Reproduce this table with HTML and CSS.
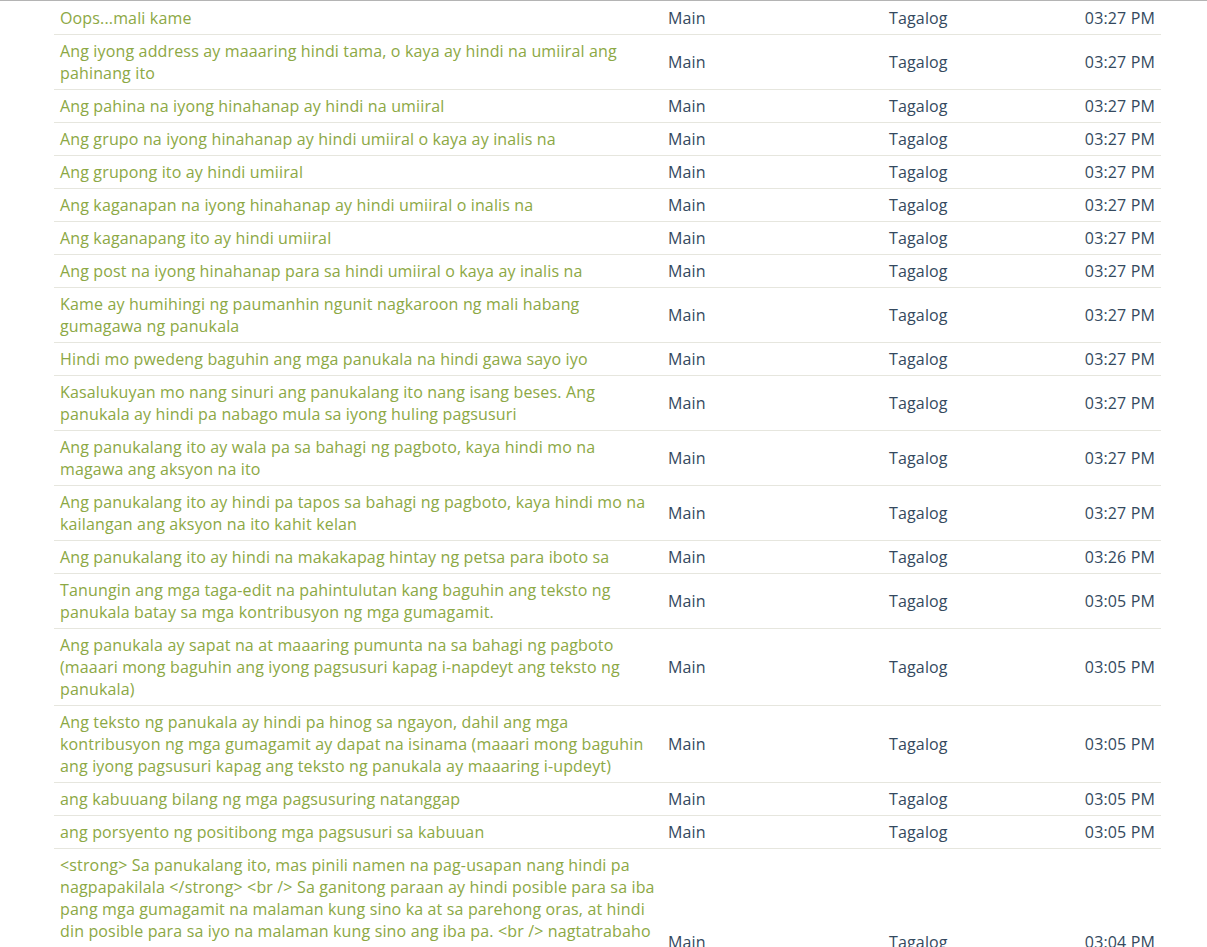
FILE: index.html
```html
<!DOCTYPE html>
<html lang="en">
  <head>
    <meta charset="UTF-8" />
    <title>Translations</title>
    <link rel="stylesheet" href="styles.css">
  </head>
  <body>
    <div class="topbar"></div>
    <table class="strings">
      <colgroup>
        <col class="c-text" />
        <col class="c-group" />
        <col class="c-lang" />
        <col class="c-time" />
      </colgroup>
      <tbody>
        <tr><td class="txt">Oops...mali kame</td><td>Main</td><td>Tagalog</td><td class="time">03:27 PM</td></tr>
        <tr><td class="txt">Ang iyong address ay maaaring hindi tama, o kaya ay hindi na umiiral ang pahinang ito</td><td>Main</td><td>Tagalog</td><td class="time">03:27 PM</td></tr>
        <tr><td class="txt">Ang pahina na iyong hinahanap ay hindi na umiiral</td><td>Main</td><td>Tagalog</td><td class="time">03:27 PM</td></tr>
        <tr><td class="txt">Ang grupo na iyong hinahanap ay hindi umiiral o kaya ay inalis na</td><td>Main</td><td>Tagalog</td><td class="time">03:27 PM</td></tr>
        <tr><td class="txt">Ang grupong ito ay hindi umiiral</td><td>Main</td><td>Tagalog</td><td class="time">03:27 PM</td></tr>
        <tr><td class="txt">Ang kaganapan na iyong hinahanap ay hindi umiiral o inalis na</td><td>Main</td><td>Tagalog</td><td class="time">03:27 PM</td></tr>
        <tr><td class="txt">Ang kaganapang ito ay hindi umiiral</td><td>Main</td><td>Tagalog</td><td class="time">03:27 PM</td></tr>
        <tr><td class="txt">Ang post na iyong hinahanap para sa hindi umiiral o kaya ay inalis na</td><td>Main</td><td>Tagalog</td><td class="time">03:27 PM</td></tr>
        <tr><td class="txt">Kame ay humihingi ng paumanhin ngunit nagkaroon ng mali habang gumagawa ng panukala</td><td>Main</td><td>Tagalog</td><td class="time">03:27 PM</td></tr>
        <tr><td class="txt">Hindi mo pwedeng baguhin ang mga panukala na hindi gawa sayo iyo</td><td>Main</td><td>Tagalog</td><td class="time">03:27 PM</td></tr>
        <tr><td class="txt">Kasalukuyan mo nang sinuri ang panukalang ito nang isang beses. Ang panukala ay hindi pa nabago mula sa iyong huling pagsusuri</td><td>Main</td><td>Tagalog</td><td class="time">03:27 PM</td></tr>
        <tr><td class="txt">Ang panukalang ito ay wala pa sa bahagi ng pagboto, kaya hindi mo na magawa ang aksyon na ito</td><td>Main</td><td>Tagalog</td><td class="time">03:27 PM</td></tr>
        <tr><td class="txt">Ang panukalang ito ay hindi pa tapos sa bahagi ng pagboto, kaya hindi mo na kailangan ang aksyon na ito kahit kelan</td><td>Main</td><td>Tagalog</td><td class="time">03:27 PM</td></tr>
        <tr><td class="txt">Ang panukalang ito ay hindi na makakapag hintay ng petsa para iboto sa</td><td>Main</td><td>Tagalog</td><td class="time">03:26 PM</td></tr>
        <tr><td class="txt">Tanungin ang mga taga-edit na pahintulutan kang baguhin ang teksto ng panukala batay sa mga kontribusyon ng mga gumagamit.</td><td>Main</td><td>Tagalog</td><td class="time">03:05 PM</td></tr>
        <tr><td class="txt">Ang panukala ay sapat na at maaaring pumunta na sa bahagi ng pagboto (maaari mong baguhin ang iyong pagsusuri kapag i-napdeyt ang teksto ng panukala)</td><td>Main</td><td>Tagalog</td><td class="time">03:05 PM</td></tr>
        <tr><td class="txt">Ang teksto ng panukala ay hindi pa hinog sa ngayon, dahil ang mga kontribusyon ng mga gumagamit ay dapat na isinama (maaari mong baguhin ang iyong pagsusuri kapag ang teksto ng panukala ay maaaring i-updeyt)</td><td>Main</td><td>Tagalog</td><td class="time">03:05 PM</td></tr>
        <tr><td class="txt">ang kabuuang bilang ng mga pagsusuring natanggap</td><td>Main</td><td>Tagalog</td><td class="time">03:05 PM</td></tr>
        <tr><td class="txt">ang porsyento ng positibong mga pagsusuri sa kabuuan</td><td>Main</td><td>Tagalog</td><td class="time">03:05 PM</td></tr>
        <tr><td class="txt">&lt;strong&gt; Sa panukalang ito, mas pinili namen na pag-usapan nang hindi pa nagpapakilala &lt;/strong&gt; &lt;br /&gt; Sa ganitong paraan ay hindi posible para sa iba pang mga gumagamit na malaman kung sino ka at sa parehong oras, at hindi din posible para sa iyo na malaman kung sino ang iba pa. &lt;br /&gt; nagtatrabaho kami upang maprotektahan ang pagkakakilanlan ng bawat gumagamit sa talakayan ng panukalang ito. &lt;br /&gt; Kapag natapos na ang bahagi ng talakayan, ang mga komento ay mananatiling nakikita ngunit hindi na maaaring baguhin ng sinuman.</td><td>Main</td><td>Tagalog</td><td class="time">03:04 PM</td></tr>
      </tbody>
    </table>
  </body>
</html>
```

FILE: styles.css
```css
body {
  margin: 0;
  padding: 0;
  background: #fff;
  font-family: "Open Sans", "Noto Sans", sans-serif;
  font-size: 16px;
  line-height: 22px;
  letter-spacing: 0.15px;
}

.topbar {
  height: 1px;
  margin-bottom: 1px;
  background-color: #b4b4b4;
}

.strings {
  width: 1107px;
  margin: 0 0 0 54px;
  border-collapse: collapse;
  table-layout: fixed;
}

.c-text {
  width: 608px;
}
.c-group {
  width: 221px;
}
.c-lang {
  width: 178px;
}
.c-time {
  width: 100px;
}

.strings td {
  padding: 5px 6px;
  border-bottom: 1px solid #e6e6de;
  vertical-align: middle;
  color: #34495e;
}

.strings td.txt {
  color: #8ca844;
}

.strings td.time {
  text-align: right;
}
```
